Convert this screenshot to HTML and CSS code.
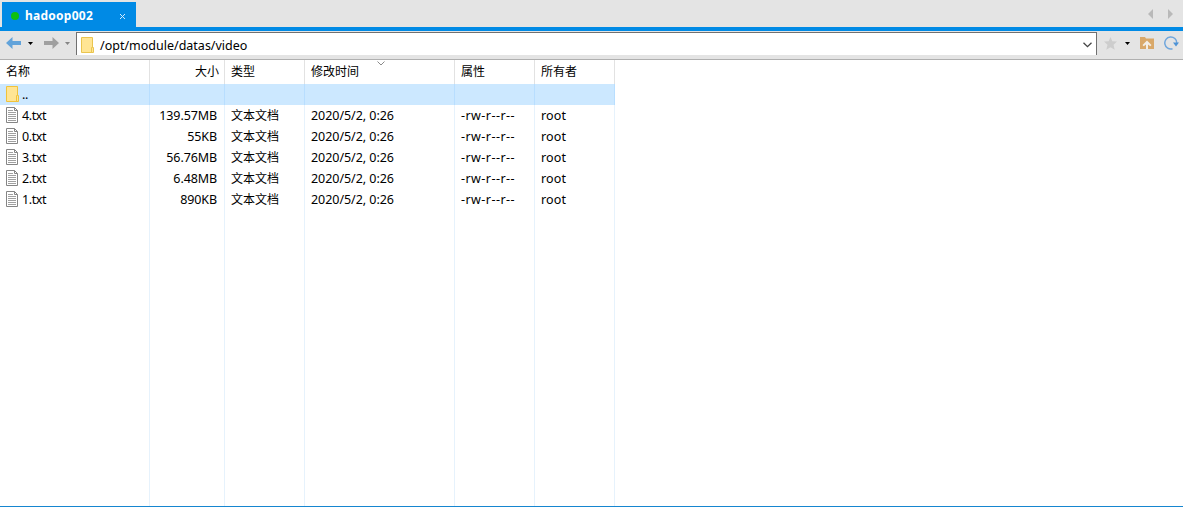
FILE: index.html
```html
<!DOCTYPE html>
<html lang="zh-CN">
<head>
  <meta charset="UTF-8">
  <title>hadoop002</title>
  <link rel="stylesheet" href="styles.css">
</head>
<body>
  <div class="tabs">
    <div class="tab">
      <span class="dot"></span>
      <span class="tab-name">hadoop002</span>
      <svg class="tab-close" width="7" height="7" viewBox="0 0 7 7"><path d="M1 1l5 5M6 1L1 6" stroke="#d5ecfc" fill="none"/></svg>
    </div>
    <div class="tab-scroll">
      <svg width="5" height="10" viewBox="0 0 5 10"><path d="M5 0v10L0 5z" fill="#b9b9b9"/></svg>
      <svg width="5" height="10" viewBox="0 0 5 10"><path d="M0 0v10l5-5z" fill="#b9b9b9"/></svg>
    </div>
  </div>

  <div class="toolbar">
    <svg class="back" width="15" height="12" viewBox="0 0 15 12"><path d="M0 6l6.500-6v4H15v4H6.500v4z" fill="#62a3da"/></svg>
    <svg class="drop-back" width="5" height="3" viewBox="0 0 5 3"><path d="M0 0h5L2.500 3z" fill="#000"/></svg>
    <svg class="forward" width="15" height="12" viewBox="0 0 15 12"><path d="M15 6L8.500 0v4H0v4h8.500v4z" fill="#a0a0a0"/></svg>
    <svg class="drop-forward" width="5" height="3" viewBox="0 0 5 3"><path d="M0 0h5L2.500 3z" fill="#858585"/></svg>
    <div class="address">
      <svg width="13" height="16" viewBox="0 0 13 16"><path d="M.5.5h11v10h1v5H.5z" fill="#ffe594" stroke="#eac54f"/><path d="M10.500 15v-4.500h1" fill="none" stroke="#eac54f"/></svg>
      <span class="path">/opt/module/datas/video</span>
      <svg class="chevron" width="9" height="6" viewBox="0 0 9 6"><path d="M.5.7l4 4 4-4" fill="none" stroke="#444" stroke-width="1.300"/></svg>
    </div>
    <svg class="star" width="13" height="13" viewBox="0 0 13 13"><path d="M6.500 0l1.800 4.200 4.700.4-3.500 3.200 1.200 4.900-4.200-2.500-4.200 2.500 1.200-4.900L0 4.600l4.700-.4z" fill="#cdcdcd"/></svg>
    <svg class="drop-star" width="5" height="3" viewBox="0 0 5 3"><path d="M0 0h5L2.500 3z" fill="#000"/></svg>
    <svg class="folder-up" width="14" height="12" viewBox="0 0 14 12"><path d="M0 0h5l1 1.500h8V12H0z" fill="#d9a869"/><path d="M7 3.500l4.500 4.500-1.200 1.200L8 7.500V12H6V7.500L3.700 9.200 2.500 8z" fill="#f3eee6"/></svg>
    <svg class="refresh" width="15" height="14" viewBox="0 0 15 14"><path d="M8.500 12.700A6 6 0 1 1 12.800 7" fill="none" stroke="#70a6dc" stroke-width="1.500"/><path d="M9 6.500h6l-3 4z" fill="#4e93d6"/></svg>
  </div>

  <table class="files">
    <colgroup>
      <col class="col-name"><col class="col-size"><col class="col-type">
      <col class="col-time"><col class="col-attr"><col class="col-owner">
    </colgroup>
    <thead>
      <tr>
        <th>名称</th>
        <th class="size">大小</th>
        <th>类型</th>
        <th class="sorted">修改时间<svg class="sort" width="8" height="5" viewBox="0 0 8 5"><path d="M.5.5L4 4 7.500.5" fill="none" stroke="#8a8a8a"/></svg></th>
        <th>属性</th>
        <th>所有者</th>
      </tr>
    </thead>
    <tbody id="fileRows">
      <tr class="selected">
        <td><div class="name"><svg width="13" height="16" viewBox="0 0 13 16"><path d="M.5.5h11v9h1v6H.5z" fill="#ffe594" stroke="#f0c33c"/><path d="M10.500 15V9.500h1" fill="none" stroke="#f0c33c"/></svg><span>..</span></div></td>
        <td></td><td></td><td></td><td></td><td></td>
      </tr>
    </tbody>
  </table>

  <script>
    const files = [
      { name: "4.txt", size: "139.57MB" },
      { name: "0.txt", size: "55KB" },
      { name: "3.txt", size: "56.76MB" },
      { name: "2.txt", size: "6.48MB" },
      { name: "1.txt", size: "890KB" }
    ];
    const tbody = document.getElementById("fileRows");

    files.forEach(file => {
      const row = document.createElement("tr");
      row.innerHTML = `
        <td><div class="name"><svg width="13" height="16" viewBox="0 0 13 16"><path d="M.5.5h8l3 3v12H.5z" fill="#fff" stroke="#858585"/><path d="M8.500.5v3h3" fill="none" stroke="#858585"/><path d="M2 3.500h5M2 5.500h8M2 7.500h8M2 9.500h8M2 11.500h8M2 13.500h8" stroke="#a0a0a0"/></svg><span>${file.name}</span></div></td>
        <td class="size">${file.size}</td>
        <td class="type">文本文档</td>
        <td class="time">2020/5/2, 0:26</td>
        <td class="attr">-rw-r--r--</td>
        <td class="owner">root</td>
      `;
      tbody.appendChild(row);
    });

    // empty row carries the column lines down to the bottom
    const filler = document.createElement("tr");
    filler.className = "filler";
    filler.innerHTML = "<td></td>".repeat(6);
    tbody.appendChild(filler);
  </script>
</body>
</html>
```
FILE: styles.css
```css
* {
  box-sizing: border-box;
}
body {
  margin: 0;
  height: 507px;
  overflow: hidden;
  background: #fff;
  color: #000;
  border-bottom: 1px solid #1686d0;
  font: 12.5px "Noto Sans", "Noto Sans CJK SC", sans-serif;
}
svg {
  display: block;
  flex: none;
}
.tabs {
  display: flex;
  justify-content: space-between;
  height: 31px;
  padding: 2px 10px 0 2px;
  background: #e4e4e4;
  border-bottom: 4px solid #008ae5;
}
.tab {
  display: flex;
  align-items: center;
  width: 134px;
  height: 26px;
  padding: 2px 10px 0 9px;
  background: #008ae5;
  color: #fff;
}
.dot {
  width: 8px;
  height: 8px;
  border-radius: 50%;
  background: #0fc00f;
}
.tab-name {
  margin: -2px 0 0 6px;
  font-size: 12px;
  font-weight: bold;
  letter-spacing: 0.25px;
}
.tab-close {
  margin-left: auto;
}
.tab-scroll {
  display: flex;
  gap: 15px;
  padding-top: 7px;
}
.toolbar {
  display: flex;
  align-items: center;
  height: 29px;
  padding: 0 4px 4px 6px;
  background: #e4e4e4;
  border-bottom: 1px solid #b0b0b0;
}
.drop-back {
  margin-left: 7px;
}
.forward {
  margin-left: 11px;
}
.drop-forward {
  margin-left: 6px;
}
.address {
  display: flex;
  flex: none;
  align-items: center;
  align-self: flex-start;
  width: 1021px;
  height: 23px;
  margin: 1px 0 0 6px;
  padding: 2px 4px 0;
  background: #fff;
  border: 1px solid #707070;
  border-bottom: none;
}
.path {
  margin-left: 6px;
}
.chevron {
  margin-left: auto;
}
.star {
  margin-left: 7px;
}
.drop-star {
  margin-left: 8px;
}
.folder-up {
  margin-left: 10px;
}
.refresh {
  margin-left: 10px;
}
.files {
  width: 615px;
  height: 446px;
  table-layout: fixed;
  border-collapse: separate;
  border-spacing: 0;
}
.col-name {
  width: 150px;
}
.col-size {
  width: 75px;
}
.col-type,
.col-attr,
.col-owner {
  width: 80px;
}
.col-time {
  width: 150px;
}
th,
td {
  height: 21px;
  padding: 0 6px;
  border-right: 1px solid #e6f2fc;
  line-height: 20px;
  font-weight: normal;
  text-align: left;
  white-space: nowrap;
}
th {
  height: 24px;
  border-right-color: #e2e2e2;
  font-size: 12px;
}
th.size,
td.size {
  text-align: right;
}
th.size {
  padding-right: 5px;
}
td.size {
  padding-right: 7px;
  letter-spacing: -0.1px;
}
td.type {
  font-size: 12px;
}
td.time {
  letter-spacing: -0.05px;
}
td.attr {
  letter-spacing: 0.45px;
}
td.owner {
  letter-spacing: 0.15px;
}
.sorted {
  position: relative;
}
.sort {
  position: absolute;
  top: 1px;
  left: 72px;
}
.selected td {
  background: #cce8ff;
  border-right-color: #b8deff;
}
.name {
  display: flex;
  gap: 3px;
  height: 20px;
  padding-top: 1px;
  line-height: 17px;
  letter-spacing: -0.4px;
}
.filler td {
  height: auto;
}
```
